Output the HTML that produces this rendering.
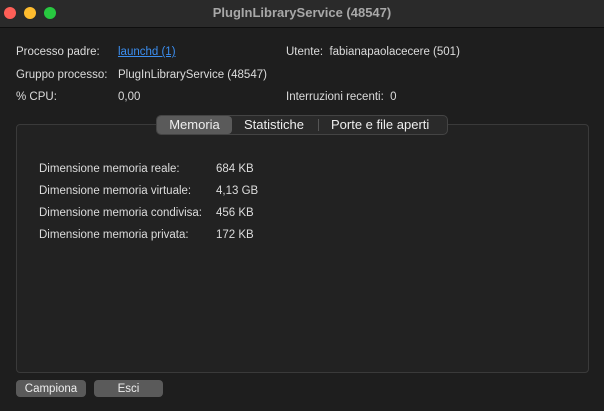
<html><head><style>
body{margin:0;width:604px;height:411px;background:#1e1e1e;font-family:"Liberation Sans",sans-serif;font-size:11.5px;color:#dcdcdc;position:relative;overflow:hidden}
.t{position:absolute;white-space:nowrap}
.tb{position:absolute;left:0;top:0;width:604px;height:27px;background:#2a2a2a;border-bottom:1px solid #0e0e0e}
.dot{position:absolute;top:7px;width:12px;height:12px;border-radius:50%}
.box{position:absolute;left:16px;top:124px;width:571px;height:247px;background:#222;border:1px solid #3a3a3a;border-radius:4px}
.seg{position:absolute;left:156px;top:115px;width:292px;height:20px;background:#2a2a2a;border:1px solid #444;border-radius:5px;box-sizing:border-box}
.btn{position:absolute;top:380px;height:17px;background:#5a5a5a;border-radius:4px;color:#eee;text-align:center;line-height:18px;font-size:11.5px}
</style></head><body>
<div class="tb">
<div class="dot" style="left:4px;background:#fe5f57"></div>
<div class="dot" style="left:24px;background:#febc2e"></div>
<div class="dot" style="left:44px;background:#28c840"></div>
<div class="t" style="left:0;width:604px;text-align:center;top:5px;font-size:13px;font-weight:bold;color:#a8a8a8">PlugInLibraryService (48547)</div>
</div>
<div class="t" style="left:16px;top:46px">Processo padre:</div>
<div class="t" style="left:118px;top:46px;color:#3b8ef0;text-decoration:underline">launchd (1)</div>
<div class="t" style="left:286px;top:46px">Utente:&nbsp; fabianapaolacecere (501)</div>
<div class="t" style="left:16px;top:69px">Gruppo processo:</div>
<div class="t" style="left:118px;top:69px">PlugInLibraryService (48547)</div>
<div class="t" style="left:16px;top:91px">% CPU:</div>
<div class="t" style="left:118px;top:91px">0,00</div>
<div class="t" style="left:286px;top:91px">Interruzioni recenti:&nbsp; 0</div>
<div class="box"></div>
<div class="seg"></div>
<div style="position:absolute;left:157px;top:116px;width:75px;height:18px;background:#5a5a5a;border-radius:4px"></div>
<div class="t" style="left:157px;width:75px;text-align:center;top:117px;font-size:13px;color:#eee">Memoria</div>
<div class="t" style="left:244px;top:117px;font-size:13px;color:#eee">Statistiche</div>
<div style="position:absolute;left:318px;top:119px;width:1px;height:12px;background:#555"></div>
<div class="t" style="left:331px;top:117px;font-size:13px;color:#eee">Porte e file aperti</div>
<div class="t" style="left:39px;top:163px">Dimensione memoria reale:</div><div class="t" style="left:216px;top:163px">684 KB</div>
<div class="t" style="left:39px;top:185px">Dimensione memoria virtuale:</div><div class="t" style="left:216px;top:185px">4,13 GB</div>
<div class="t" style="left:39px;top:207px">Dimensione memoria condivisa:</div><div class="t" style="left:216px;top:207px">456 KB</div>
<div class="t" style="left:39px;top:229px">Dimensione memoria privata:</div><div class="t" style="left:216px;top:229px">172 KB</div>
<div class="btn" style="left:16px;width:70px">Campiona</div>
<div class="btn" style="left:94px;width:69px">Esci</div>
</body></html>
